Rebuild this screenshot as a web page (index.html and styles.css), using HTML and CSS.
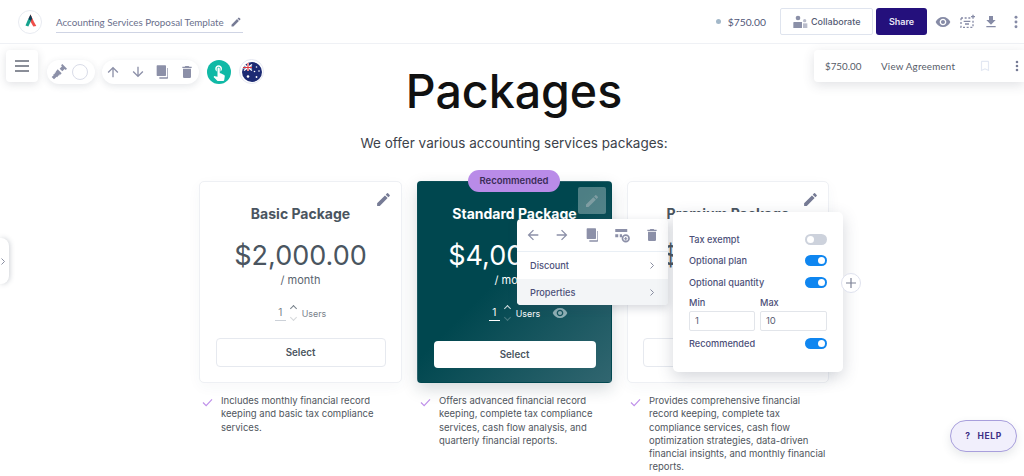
FILE: index.html
```html
<!DOCTYPE html>
<html>
<head>
    <meta charset="UTF-8">
    <title>Accounting Services Proposal Template</title>
    <link rel="stylesheet" href="styles.css">
</head>

<body>

<svg class="defs" width="0" height="0">
    <symbol id="pencil" viewBox="0 0 24 24"><path d="M3 17.25V21h3.75L17.81 9.94l-3.75-3.75L3 17.25zM20.71 7.04a1 1 0 0 0 0-1.41l-2.34-2.34a1 1 0 0 0-1.41 0l-1.83 1.83 3.75 3.75 1.83-1.83z"/></symbol>
    <symbol id="eye" viewBox="0 0 24 24"><path d="M12 4.5C7 4.5 2.73 7.61 1 12c1.73 4.39 6 7.5 11 7.5s9.27-3.11 11-7.5c-1.73-4.39-6-7.5-11-7.5zM12 17c-2.76 0-5-2.24-5-5s2.24-5 5-5 5 2.24 5 5-2.24 5-5 5zm0-8c-1.66 0-3 1.34-3 3s1.34 3 3 3 3-1.34 3-3-1.34-3-3-3z"/></symbol>
    <symbol id="download" viewBox="0 0 24 24"><path d="M19 9h-4V3H9v6H5l7 7 7-7zM5 18v2h14v-2H5z"/></symbol>
    <symbol id="more" viewBox="0 0 24 24"><circle cx="12" cy="5" r="2.2"/><circle cx="12" cy="12" r="2.2"/><circle cx="12" cy="19" r="2.2"/></symbol>
    <symbol id="up" viewBox="0 0 24 24"><path d="M4 12l1.41 1.41L11 7.83V20h2V7.83l5.58 5.59L20 12l-8-8-8 8z"/></symbol>
    <symbol id="down" viewBox="0 0 24 24"><path d="M20 12l-1.41-1.41L13 16.17V4h-2v12.17l-5.58-5.59L4 12l8 8 8-8z"/></symbol>
    <symbol id="back" viewBox="0 0 24 24"><path d="M20 11H7.83l5.59-5.59L12 4l-8 8 8 8 1.41-1.41L7.83 13H20v-2z"/></symbol>
    <symbol id="forward" viewBox="0 0 24 24"><path d="M12 4l-1.41 1.41L16.17 11H4v2h12.17l-5.58 5.59L12 20l8-8z"/></symbol>
    <symbol id="copy" viewBox="0 0 24 24"><path d="M5 2h12a1 1 0 0 1 1 1v14a1 1 0 0 1-1 1H5a1 1 0 0 1-1-1V3a1 1 0 0 1 1-1z"/><path d="M20 6h1v15a1 1 0 0 1-1 1H8v-2h12z"/></symbol>
    <symbol id="trash" viewBox="0 0 24 24"><path d="M6 19c0 1.1.9 2 2 2h8c1.1 0 2-.9 2-2V7H6v12zM19 4h-3.5l-1-1h-5l-1 1H5v2h14V4z"/></symbol>
    <symbol id="addrow" viewBox="0 0 24 24"><path d="M3 4h16v4H3zM3 11h4v4H3zM9 11h3v4H9z"/><path fill-rule="evenodd" d="M17 11a5.500 5.500 0 1 1 0 11 5.500 5.500 0 0 1 0-11zm0 2.200a3.300 3.300 0 1 0 0 6.600 3.300 3.300 0 0 0 0-6.600z"/><path d="M16.200 14.800h1.600v1.400h1.400v1.600h-1.400v1.400h-1.600v-1.400h-1.400v-1.600h1.400z"/></symbol>
    <symbol id="bookmark" viewBox="0 0 24 24"><path d="M17 3H7c-1.100 0-2 .9-2 2v16l7-3 7 3V5c0-1.100-.9-2-2-2zm0 15l-5-2.180L7 18V5h10v13z"/></symbol>
    <symbol id="hand" viewBox="0 0 24 24"><path d="M9 11.240V7.500C9 6.120 10.120 5 11.500 5S14 6.120 14 7.500v3.740c1.210-.81 2-2.180 2-3.740C16 5.010 13.990 3 11.500 3S7 5.010 7 7.500c0 1.560.79 2.930 2 3.740zm9.840 4.630l-4.540-2.260c-.17-.07-.35-.11-.54-.11H13v-6c0-.83-.67-1.500-1.500-1.500S10 6.670 10 7.500v10.740l-3.430-.72c-.08-.01-.15-.03-.24-.03-.31 0-.59.13-.79.33l-.79.8 4.940 4.940c.27.27.65.44 1.060.44h6.790c.75 0 1.330-.55 1.440-1.280l.75-5.270c.01-.07.02-.14.02-.2 0-.62-.38-1.160-.91-1.380z"/></symbol>
    <symbol id="brush" viewBox="0 0 24 24"><path d="M15 2l2-2 7 7-2 2-1.500-1.500-3.500 3.500-4-4 3.500-3.500z"/><path d="M10 8l6 6-2 2-1-.5-1 2.500-1-1-1.500 3-1-1L4.500 23 1 19.500l3-2.500-1-1 3-1.500-1-1 2.500-1-.5-1z"/></symbol>
    <symbol id="fields" viewBox="0 0 24 24"><path fill="none" stroke="currentColor" stroke-width="2" stroke-dasharray="3 2.500" d="M3 6h15M21 10v10H3V6"/><path d="M7 10h10v2H7zM9 14h6v2H9zM20 1h2v2h2v2h-2v2h-2V5h-2V3h2z"/></symbol>
    <symbol id="people" viewBox="0 0 24 24"><circle cx="9" cy="6" r="3.500"/><path d="M3 12h12v9H2v-8a1 1 0 0 1 1-1z"/><circle cx="19" cy="10" r="2.500" opacity=".6"/><path d="M16.500 14H23v7h-6.500z" opacity=".6"/></symbol>
</svg>

<header class="topbar">
    <svg class="logo" width="24" height="24" viewBox="0 0 24 24">
        <circle cx="12" cy="12" r="11.500" fill="#fff" stroke="#e8ebf1"/>
        <path d="M12.500 4.500l3 7-4.500-2.500z" fill="#ef4f4a"/>
        <path d="M12.500 4.500L15.500 11l2.800 5-3 .5-4.300-7.500z" fill="#ef4f4a"/>
        <path d="M12.500 4.500L10 9.500l3 1.500 1.200-2.500z" fill="#0c3f55"/>
        <path d="M10.200 9L7.500 15.500l2.800 1 2.700-5.500z" fill="#15a38e"/>
    </svg>
    <div class="doc-title">
        <span>Accounting Services Proposal Template</span>
        <svg class="icon-12"><use href="#pencil"/></svg>
    </div>
    <div class="topbar-right">
        <span class="status-dot"></span>
        <span class="total">$750.00</span>
        <button class="btn-collab"><svg class="icon-16"><use href="#people"/></svg>Collaborate</button>
        <button class="btn-share">Share</button>
        <svg class="top-icon"><use href="#eye"/></svg>
        <svg class="top-icon"><use href="#fields"/></svg>
        <svg class="top-icon"><use href="#download"/></svg>
        <svg class="top-icon"><use href="#more"/></svg>
    </div>
</header>

<main class="page">
    <h1>Packages</h1>
    <p class="subtitle">We offer various accounting services packages:</p>

    <div class="plans">
        <section class="plan">
            <div class="card">
                <svg class="card-edit"><use href="#pencil"/></svg>
                <h2>Basic Package</h2>
                <div class="price">$2,000.00</div>
                <div class="period">/ month</div>
                <div class="users">
                    <span class="qty">1</span>
                    <span class="spin"><i class="caret-up"></i><i class="caret-down"></i></span>
                    <span>Users</span>
                </div>
                <button class="select">Select</button>
            </div>
            <div class="feature">
                <svg class="check" viewBox="0 0 12 10"><path d="M1 5l3.500 3.500L11 1.500"/></svg>
                <p>Includes monthly financial record keeping and basic tax compliance services.</p>
            </div>
        </section>

        <section class="plan">
            <div class="card dark">
                <span class="badge">Recommended</span>
                <span class="edit-box"><svg class="icon-16"><use href="#pencil"/></svg></span>
                <h2>Standard Package</h2>
                <div class="price">$4,000.00</div>
                <div class="period">/ month</div>
                <div class="users">
                    <span class="qty">1</span>
                    <span class="spin"><i class="caret-up"></i><i class="caret-down"></i></span>
                    <span>Users</span>
                    <svg class="users-eye"><use href="#eye"/></svg>
                </div>
                <button class="select">Select</button>
            </div>
            <div class="feature">
                <svg class="check" viewBox="0 0 12 10"><path d="M1 5l3.500 3.500L11 1.500"/></svg>
                <p>Offers advanced financial record keeping, complete tax compliance services, cash flow analysis, and quarterly financial reports.</p>
            </div>
        </section>

        <section class="plan">
            <div class="card">
                <svg class="card-edit"><use href="#pencil"/></svg>
                <h2>Premium Package</h2>
                <div class="price">$6,000.00</div>
                <div class="period">/ month</div>
                <div class="users">
                    <span class="qty">1</span>
                    <span class="spin"><i class="caret-up"></i><i class="caret-down"></i></span>
                    <span>Users</span>
                </div>
                <button class="select">Select</button>
            </div>
            <div class="feature">
                <svg class="check" viewBox="0 0 12 10"><path d="M1 5l3.500 3.500L11 1.500"/></svg>
                <p>Provides comprehensive financial record keeping, complete tax compliance services, cash flow optimization strategies, data-driven financial insights, and monthly financial reports.</p>
            </div>
        </section>
    </div>
</main>

<!-- floating things over the page -->
<div class="side-tab"><svg viewBox="0 0 8 12"><path d="M2 2l4 4-4 4"/></svg></div>

<div class="hamburger"><i></i><i></i><i></i></div>

<div class="pill pill-style">
    <svg class="icon-16"><use href="#brush"/></svg>
    <span class="swatch"></span>
</div>
<div class="pill pill-move">
    <svg class="icon-16"><use href="#up"/></svg>
    <svg class="icon-16"><use href="#down"/></svg>
    <svg class="icon-16"><use href="#copy"/></svg>
    <svg class="icon-16"><use href="#trash"/></svg>
</div>
<div class="round-hand"><svg class="icon-18"><use href="#hand"/></svg></div>
<div class="round-flag">
    <svg width="20" height="20" viewBox="0 0 20 20">
        <circle cx="10" cy="10" r="10" fill="#1c2a73"/>
        <path d="M2 2.500l8 6M10 2.500l-8 6" stroke="#fff" stroke-width="1.400"/>
        <path d="M6 1v8M1 5.500h9" stroke="#fff" stroke-width="2"/>
        <path d="M6 1v8M1 5.500h9" stroke="#e0323c" stroke-width="1.100"/>
        <g fill="#fff">
            <circle cx="6" cy="14.500" r="1.300"/><circle cx="14.500" cy="5" r=".8"/><circle cx="17" cy="9" r=".8"/>
            <circle cx="12.500" cy="9.500" r=".8"/><circle cx="14.500" cy="15" r=".9"/>
        </g>
    </svg>
</div>

<div class="agreement">
    <span class="agreement-price">$750.00</span>
    <span class="agreement-link">View Agreement</span>
    <svg class="agreement-mark"><use href="#bookmark"/></svg>
    <svg class="agreement-more"><use href="#more"/></svg>
</div>

<div class="plan-menu">
    <div class="plan-menu-icons">
        <svg class="icon-16"><use href="#back"/></svg>
        <svg class="icon-16"><use href="#forward"/></svg>
        <svg class="icon-16"><use href="#copy"/></svg>
        <svg class="icon-18"><use href="#addrow"/></svg>
        <svg class="icon-16"><use href="#trash"/></svg>
    </div>
    <div class="plan-menu-row"><span>Discount</span><svg viewBox="0 0 8 12"><path d="M2 2l4 4-4 4"/></svg></div>
    <div class="plan-menu-row active"><span>Properties</span><svg viewBox="0 0 8 12"><path d="M2 2l4 4-4 4"/></svg></div>
</div>

<div class="props">
    <div class="prop-row"><span>Tax exempt</span><span class="toggle"></span></div>
    <div class="prop-row"><span>Optional plan</span><span class="toggle on"></span></div>
    <div class="prop-row"><span>Optional quantity</span><span class="toggle on"></span></div>
    <div class="prop-fields">
        <label>Min<input type="text" value="1"></label>
        <label>Max<input type="text" value="10"></label>
    </div>
    <div class="prop-row"><span>Recommended</span><span class="toggle on"></span></div>
</div>

<div class="add-plan">
    <svg width="12" height="12" viewBox="0 0 12 12"><path d="M6 1v10M1 6h10"/></svg>
</div>

<button class="help"><span>?</span>HELP</button>

</body>

</html>
```

FILE: styles.css
```css
* {
    box-sizing: border-box;
}

html,
body {
    height: 476px;
    overflow: hidden;
}

body {
    position: relative;
    margin: 0;
    background: #fff;
    font-family: "Inter", "Liberation Sans", sans-serif;
    color: #4a5560;
}

button {
    font-family: inherit;
}

svg {
    fill: currentColor;
}

.defs {
    position: absolute;
}

.icon-12 {
    width: 12px;
    height: 12px;
}

.icon-16 {
    width: 16px;
    height: 16px;
}

.icon-18 {
    width: 18px;
    height: 18px;
}

/* top bar */
.topbar {
    display: flex;
    align-items: center;
    height: 44px;
    padding-left: 18px;
    border-bottom: 1px solid #eff1f5;
}

.logo {
    flex: none;
    margin-right: 14px;
}

.doc-title {
    display: flex;
    align-items: center;
    gap: 6px;
    width: 187px;
    height: 22px;
    margin-top: 1px;
    border-bottom: 1px solid #cfd4e4;
    font-family: "Lato", "Liberation Sans", sans-serif;
    font-size: 9.800px;
    white-space: nowrap;
    color: #6a6f8c;
}

.doc-title svg {
    color: #767b95;
}

.topbar-right {
    display: flex;
    align-items: center;
    margin-left: auto;
}

.status-dot {
    width: 5px;
    height: 5px;
    margin-right: 7px;
    border-radius: 50%;
    background: #a3b8c9;
}

.total {
    margin-right: 14px;
    font-family: "Lato", "Liberation Sans", sans-serif;
    font-size: 10.300px;
    color: #4f5677;
}

.btn-collab {
    display: flex;
    align-items: center;
    gap: 3px;
    width: 93px;
    height: 27px;
    margin-right: 3px;
    padding: 0 0 0 11px;
    background: #fff;
    border: 1px solid #dfe4ee;
    border-radius: 2px;
    font-size: 9px;
    font-weight: 500;
    color: #555b74;
}

.btn-collab svg {
    color: #8b90a8;
}

.btn-share {
    width: 51px;
    height: 27px;
    margin-right: 8px;
    background: #24107c;
    border: none;
    border-radius: 3px;
    font-size: 9px;
    font-weight: 600;
    color: #e8e6f5;
}

.top-icon {
    width: 16px;
    height: 16px;
    margin-right: 8px;
    color: #868ba6;
}

.top-icon:last-child {
    margin-right: 0;
    margin-left: 1px;
}

/* page */
.page {
    display: flex;
    flex-direction: column;
    align-items: center;
    padding-left: 4px;
}

h1 {
    margin: 17px 0 0;
    font-size: 46.500px;
    line-height: 60px;
    font-weight: 500;
    color: #111;
}

.subtitle {
    margin: 12px 0 0;
    font-size: 13.500px;
    line-height: 20px;
    color: #3c424a;
}

.plans {
    display: grid;
    grid-template-columns: 203px 195px 202px;
    gap: 15px;
    margin-top: 28px;
}

.card {
    position: relative;
    display: flex;
    flex-direction: column;
    align-items: center;
    height: 202px;
    padding: 24px 16px 0;
    border: 1px solid #eef0f4;
    border-radius: 5px;
    background: #fff;
    box-shadow: 0 4px 14px rgba(60, 70, 90, 0.04);
}

.card h2 {
    margin: 0;
    font-size: 14px;
    line-height: 16px;
    font-weight: 700;
    white-space: nowrap;
    color: #4a5560;
}

.price {
    margin-top: 17px;
    font-size: 27px;
    line-height: 34px;
    color: #4a5560;
}

.period {
    font-size: 11px;
    line-height: 14px;
    color: #5a6470;
}

.users {
    position: relative;
    display: flex;
    align-items: center;
    gap: 4px;
    height: 18px;
    margin-top: 17px;
    font-size: 8.900px;
    color: #77808a;
}

.qty {
    width: 11px;
    border-bottom: 1px solid #ccd1d8;
    font-size: 10px;
    line-height: 15px;
    text-align: center;
}

.spin {
    display: flex;
    flex-direction: column;
    gap: 4px;
    width: 8px;
}

.spin i {
    display: block;
    width: 5px;
    height: 5px;
    margin-left: 1px;
    border-left: 1px solid #77808a;
    border-top: 1px solid #77808a;
    transform: rotate(45deg);
}

.spin .caret-down {
    opacity: 0.3;
    transform: rotate(225deg);
}

.select {
    width: 170px;
    height: 29px;
    margin-top: 16px;
    background: #fff;
    border: 1px solid #e6e9ef;
    border-radius: 4px;
    font-size: 9.800px;
    font-weight: 600;
    color: #4a5560;
}

.card-edit {
    position: absolute;
    top: 9px;
    right: 9px;
    width: 17px;
    height: 17px;
    color: #767b95;
}

/* dark card in the middle */
.card.dark {
    border-color: transparent;
    border-radius: 4px;
    background: linear-gradient(135deg, #00474f 0%, #00474f 45%, #316670 100%);
    box-shadow: 0 6px 16px rgba(30, 50, 60, 0.18);
}

.dark h2,
.dark .price,
.dark .period,
.dark .users {
    color: #fff;
}

.dark .qty {
    border-bottom-color: #fff;
}

.dark .spin i {
    border-color: #cfdcde;
}

.dark .select {
    width: 162px;
    height: 27px;
    margin-top: 19px;
    border: none;
}

.users-eye {
    position: absolute;
    top: 1px;
    left: calc(100% + 12px);
    width: 16px;
    height: 16px;
    color: #8fb0b5;
}

.badge {
    position: absolute;
    top: -12px;
    left: 50px;
    width: 92px;
    height: 22px;
    border-radius: 11px;
    background: #b98be8;
    font-size: 9.500px;
    font-weight: 600;
    line-height: 22px;
    text-align: center;
    color: #3a2b57;
}

.edit-box {
    position: absolute;
    top: 5px;
    right: 5px;
    display: flex;
    align-items: center;
    justify-content: center;
    width: 28px;
    height: 27px;
    border-radius: 2px;
    background: rgba(255, 255, 255, 0.3);
    color: #7f9da2;
}

.feature {
    display: flex;
    gap: 8px;
    margin-top: 11px;
    padding-left: 3px;
}

.check {
    flex: none;
    width: 11px;
    height: 9px;
    margin-top: 4px;
    fill: none;
    stroke: #bf90ea;
    stroke-width: 1.300;
}

.feature p {
    flex: 1;
    margin: 0;
    font-size: 9.500px;
    line-height: 13.300px;
    color: #50565e;
}

/* floating toolbars */
.side-tab {
    position: absolute;
    top: 238px;
    left: 0;
    display: flex;
    align-items: center;
    width: 9px;
    height: 46px;
    border-radius: 0 8px 8px 0;
    background: #fff;
    box-shadow: 1px 0 5px rgba(60, 70, 90, 0.25);
}

.side-tab svg,
.plan-menu-row svg {
    width: 6px;
    height: 9px;
    fill: none;
    stroke: #7d8296;
    stroke-width: 1.200;
}

.hamburger {
    position: absolute;
    top: 50px;
    left: 6px;
    display: flex;
    flex-direction: column;
    align-items: center;
    justify-content: center;
    gap: 3px;
    width: 32px;
    height: 32px;
    border-radius: 4px;
    background: #fff;
    box-shadow: 0 2px 8px rgba(60, 70, 90, 0.16);
}

.hamburger i {
    width: 14px;
    height: 2px;
    background: #8a8e98;
}

.pill {
    position: absolute;
    top: 60px;
    display: flex;
    align-items: center;
    height: 24px;
    border-radius: 12px;
    background: #fff;
    box-shadow: 0 2px 7px rgba(60, 70, 90, 0.14);
    color: #8c90a8;
}

.pill-style {
    left: 47px;
    width: 48px;
    gap: 5px;
    padding-left: 4px;
}

.swatch {
    width: 16px;
    height: 16px;
    border: 1px solid #d9dce8;
    border-radius: 50%;
    background: #fff;
}

.pill-move {
    left: 102px;
    width: 97px;
    justify-content: space-between;
    padding: 0 4px 0 3px;
}

.round-hand {
    position: absolute;
    top: 60px;
    left: 207px;
    display: flex;
    align-items: center;
    justify-content: center;
    width: 24px;
    height: 24px;
    border-radius: 50%;
    background: #10b9a6;
    color: #fff;
}

.round-flag {
    position: absolute;
    top: 59px;
    left: 239px;
    display: flex;
    align-items: center;
    justify-content: center;
    width: 25px;
    height: 25px;
    border: 1px solid #e6e8f2;
    border-radius: 50%;
    background: #fff;
}

.agreement {
    position: absolute;
    top: 50px;
    left: 814px;
    display: flex;
    align-items: center;
    width: 210px;
    height: 32px;
    padding-left: 11px;
    border-radius: 4px 0 0 4px;
    background: #fff;
    box-shadow: 0 3px 12px rgba(60, 70, 90, 0.16);
    font-family: "Lato", "Liberation Sans", sans-serif;
    font-size: 9.800px;
    color: #565b68;
}

.agreement-price {
    width: 56px;
}

.agreement-link {
    width: 97px;
    letter-spacing: 0.2px;
}

.agreement-mark {
    width: 14px;
    height: 14px;
    color: #e3e8f3;
}

.agreement-more {
    width: 14px;
    height: 14px;
    margin-left: 18px;
    color: #767b95;
}

/* plan popups */
.plan-menu {
    position: absolute;
    top: 219px;
    left: 517px;
    width: 151px;
    height: 86px;
    overflow: hidden;
    border-radius: 4px;
    background: #fff;
    box-shadow: 0 3px 10px rgba(60, 70, 90, 0.22);
    font-size: 9.200px;
    font-weight: 500;
    color: #4c4f78;
}

.plan-menu-icons {
    display: flex;
    align-items: center;
    justify-content: space-between;
    height: 33px;
    padding: 0 8px;
    border-bottom: 1px solid #e9eff5;
    color: #8c90a8;
}

.plan-menu-row {
    display: flex;
    align-items: center;
    justify-content: space-between;
    height: 27px;
    padding: 0 13px;
}

.plan-menu-row.active {
    background: #f3f5f7;
}

.props {
    position: absolute;
    top: 212px;
    left: 673px;
    display: flex;
    flex-direction: column;
    gap: 5px;
    width: 170px;
    height: 160px;
    padding: 19px 16px 0;
    border-radius: 5px;
    background: #fff;
    box-shadow: 0 5px 16px rgba(60, 70, 90, 0.22);
    font-size: 9.200px;
    font-weight: 500;
    color: #4c4f78;
}

.prop-row {
    display: flex;
    align-items: center;
    justify-content: space-between;
    height: 16.500px;
}

.toggle {
    position: relative;
    width: 22px;
    height: 11px;
    border-radius: 6px;
    background: #cdd2dc;
}

.toggle::after {
    content: "";
    position: absolute;
    top: 2px;
    left: 2px;
    width: 7px;
    height: 7px;
    border-radius: 50%;
    background: #fff;
}

.toggle.on {
    background: #0f86f0;
}

.toggle.on::after {
    left: 13px;
}

.prop-fields {
    display: grid;
    grid-template-columns: 66px 67px;
    gap: 5px;
    margin-top: 1px;
}

.prop-fields label {
    display: flex;
    flex-direction: column;
    gap: 3px;
}

.prop-fields input {
    width: 100%;
    height: 20px;
    padding: 0 5px;
    border: 1px solid #e2e5ea;
    border-radius: 2px;
    font-family: inherit;
    font-size: 9.500px;
    color: #5a5f74;
}

.add-plan {
    position: absolute;
    top: 273px;
    left: 841px;
    display: flex;
    align-items: center;
    justify-content: center;
    width: 20px;
    height: 20px;
    border: 1px solid #dfe2ee;
    border-radius: 50%;
    background: #fff;
}

.add-plan svg {
    fill: none;
    stroke: #7d8296;
    stroke-width: 1.200;
}

.help {
    position: absolute;
    top: 420px;
    left: 950px;
    display: flex;
    align-items: center;
    justify-content: center;
    gap: 7px;
    width: 67px;
    height: 32px;
    border: 1px solid #a89fdc;
    border-radius: 16px;
    background: #f1effc;
    box-shadow: 0 4px 10px rgba(60, 70, 90, 0.12);
    font-size: 8.500px;
    font-weight: 700;
    letter-spacing: 0.6px;
    color: #3d2f86;
}
```
